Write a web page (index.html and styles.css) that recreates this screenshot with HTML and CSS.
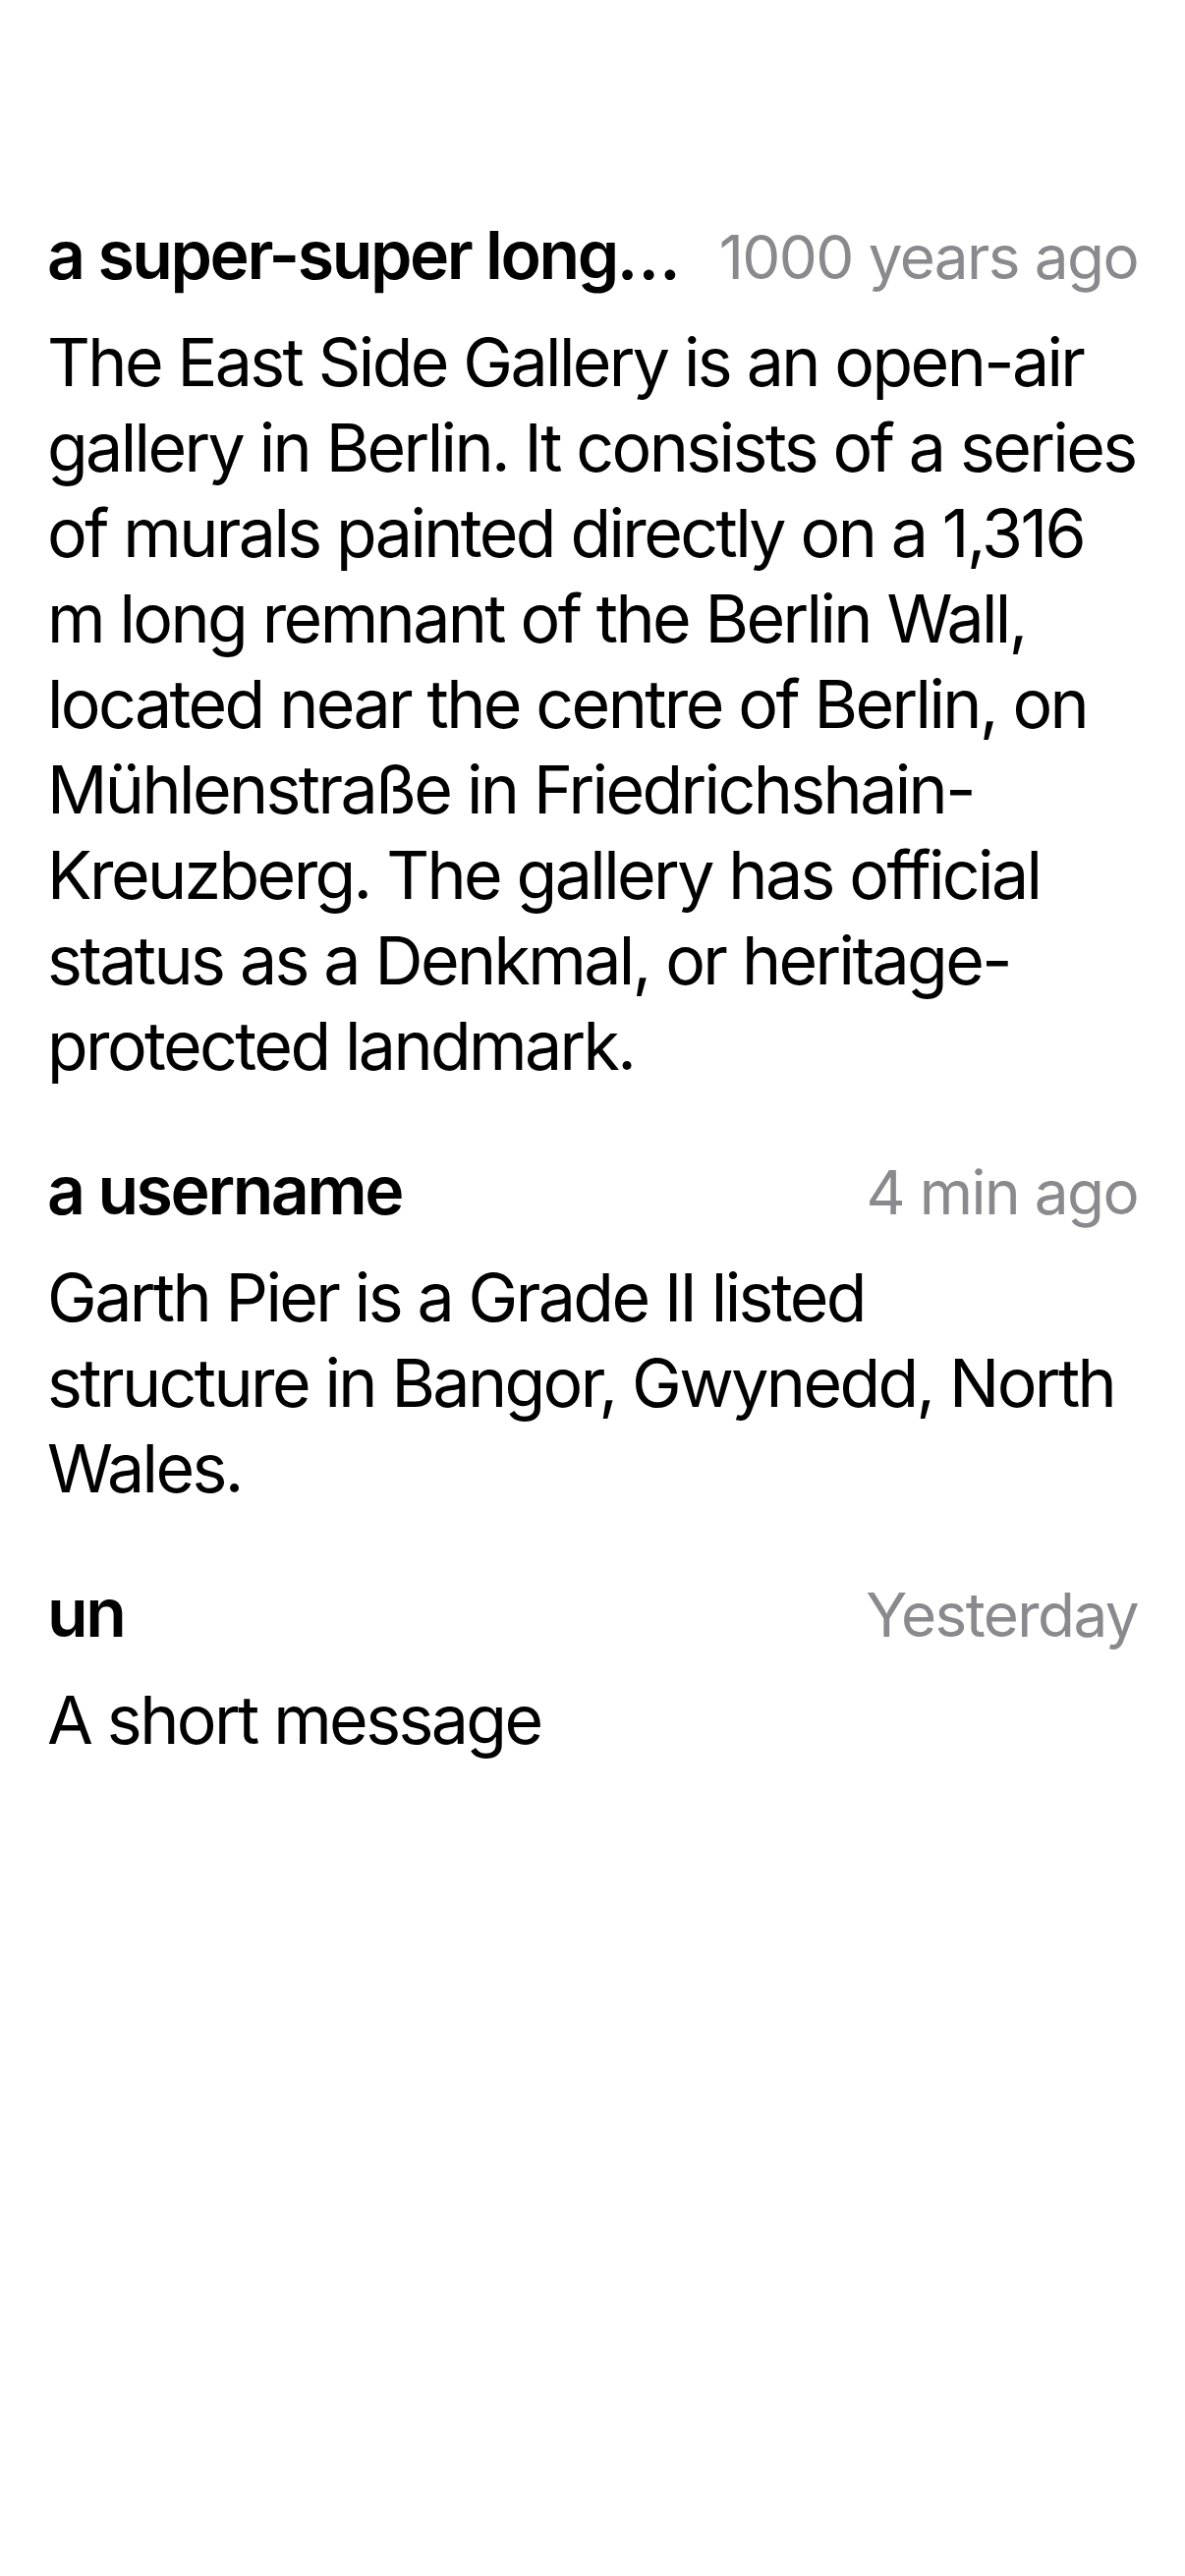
FILE: index.html
```html
<!DOCTYPE html>
<html lang="en">
<head>
<meta charset="utf-8">
<title>Messages</title>
<link rel="stylesheet" href="styles.css">
</head>
<body>
<main class="list">
  <article class="row">
    <div class="row-head">
      <span class="name">a super-super long…</span>
      <span class="time">1000 years ago</span>
    </div>
    <p class="body">The East Side Gallery is an open-air gallery in Berlin. It consists of a series of murals painted directly on a 1,316 m long remnant of the Berlin Wall, located near the centre of Berlin, on Mühlenstraße in Friedrichshain-Kreuzberg. The gallery has official status as a Denkmal, or heritage-protected landmark.</p>
  </article>
  <article class="row">
    <div class="row-head">
      <span class="name">a username</span>
      <span class="time">4 min ago</span>
    </div>
    <p class="body">Garth Pier is a Grade II listed structure in Bangor, Gwynedd, North Wales.</p>
  </article>
  <article class="row">
    <div class="row-head">
      <span class="name">un</span>
      <span class="time">Yesterday</span>
    </div>
    <p class="body">A short message</p>
  </article>
</main>
</body>
</html>
```

FILE: styles.css
```css
html, body {
  margin: 0;
  padding: 0;
  background: #ffffff;
}

body {
  font-family: Inter, "Noto Sans", "Liberation Sans", sans-serif;
  color: #000000;
  width: 1206px;
  min-height: 2622px;
}

.list {
  display: flex;
  flex-direction: column;
  gap: 60px;
  padding: 216px 48px 0 48px;
}

.row {
  display: flex;
  flex-direction: column;
  gap: 20px;
}

.row-head {
  display: flex;
  align-items: baseline;
  justify-content: space-between;
  gap: 40px;
}

.name {
  font-size: 68px;
  line-height: 87px;
  font-weight: 600;
  letter-spacing: -2.4px;
  white-space: nowrap;
}

.time {
  font-size: 62px;
  line-height: 87px;
  font-weight: 400;
  color: #8a8a8e;
  letter-spacing: -1.6px;
  white-space: nowrap;
}

.body {
  margin: 0;
  font-size: 68px;
  line-height: 87px;
  font-weight: 400;
  letter-spacing: -2.6px;
}
```
